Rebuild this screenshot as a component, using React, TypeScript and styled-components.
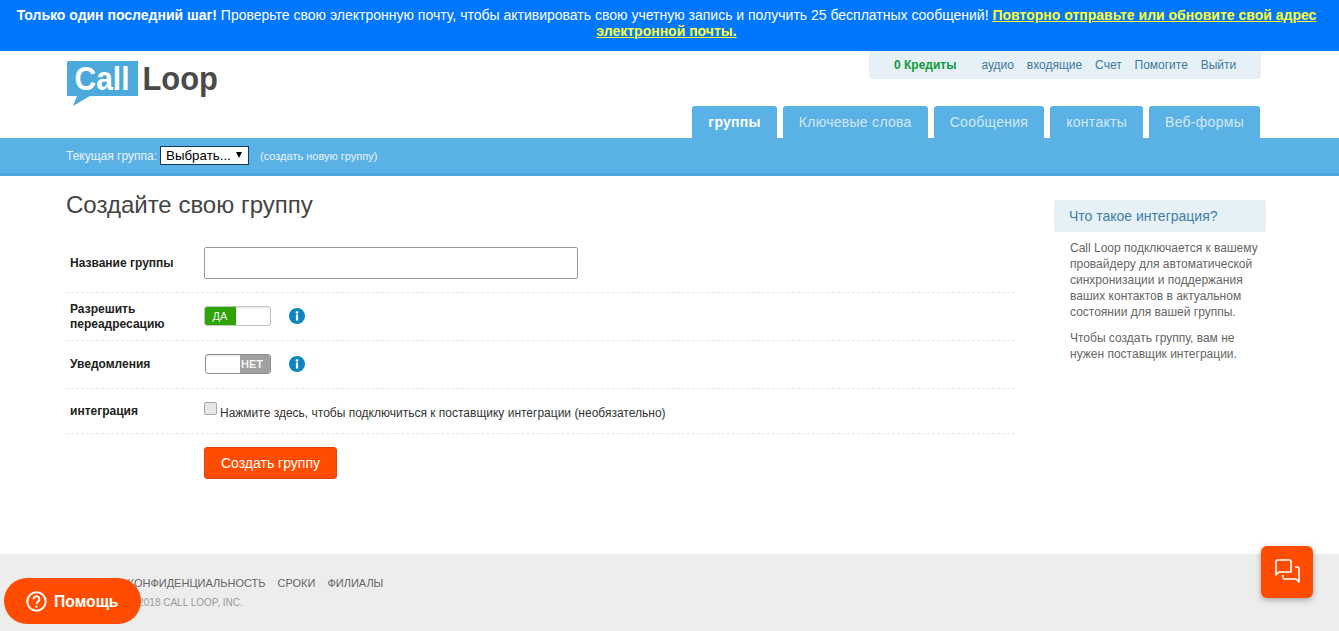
import React from "react";
import styled, { createGlobalStyle } from "styled-components";

const Global = createGlobalStyle`
  html, body { margin: 0; padding: 0; background: #fff; }
  body { font-family: "Liberation Sans", Arial, sans-serif; overflow: hidden; }
  * { box-sizing: border-box; }
`;

const Page = styled.div`
  height: 631px;
  display: flex;
  flex-direction: column;
`;

const Banner = styled.div`
  height: 51px;
  background: #0077ff;
  color: #fff;
  font-size: 14px;
  line-height: 16px;
  padding: 7px 22px 0 16px;
  text-align: center;
  b { font-weight: 700; }
  a { color: #ffff33; font-weight: 700; text-decoration: underline; }
`;

const Header = styled.header`
  height: 87px;
  padding: 0 78px 0 66px;
  display: flex;
  justify-content: space-between;
`;

const Logo = styled.svg`
  display: block;
  margin: 10px 0 0 1px;
`;

const HeaderRight = styled.div`
  display: flex;
  flex-direction: column;
  align-items: flex-end;
  justify-content: space-between;
`;

const TopLinks = styled.nav`
  width: 392px;
  height: 28px;
  background: #e6f0f7;
  border-radius: 0 0 3px 3px;
  display: flex;
  align-items: center;
  padding-left: 25px;
  font-size: 12px;
  color: #41789e;
`;

const Credits = styled.span`
  font-weight: 700;
  color: #0f9a3a;
  margin-right: 25px;
`;

const TopLink = styled.a`
  margin-right: 12.85px;
`;

const Tabs = styled.nav`
  display: flex;
  gap: 6px;
  margin-right: 1px;
`;

const Tab = styled.a<{ $active?: boolean }>`
  height: 32px;
  padding: 0 16px;
  display: flex;
  align-items: center;
  background: #5ab1e5;
  border-radius: 3px 3px 0 0;
  font-size: 14px;
  letter-spacing: 0.28px;
  font-weight: ${(p) => (p.$active ? 700 : 400)};
  color: ${(p) => (p.$active ? "#fff" : "#d2e9f8")};
`;

const GroupBar = styled.div`
  height: 38px;
  background: #5ab1e5;
  border-bottom: 3px solid #4aa6dc;
  padding: 0 0 0 66px;
  display: flex;
  align-items: center;
  font-size: 12px;
  color: #e9f5fc;
`;

const FakeSelect = styled.div`
  width: 89px;
  height: 19px;
  margin-left: 3px;
  border: 1px solid #123a55;
  background: #fff;
  color: #000;
  font-size: 13.33px;
  line-height: 18px;
  padding-left: 5px;
  position: relative;
  &::after {
    content: "";
    position: absolute;
    right: 6px;
    top: 5px;
    border-left: 3.5px solid transparent;
    border-right: 3.5px solid transparent;
    border-top: 6px solid #000;
  }
`;

const CreateLink = styled.a`
  margin-left: 11px;
  font-size: 11px;
`;

const Main = styled.main`
  flex: 1;
  display: flex;
  padding: 15px 0 0 66px;
  gap: 39px;
`;

const FormColumn = styled.section`
  width: 949px;
`;

const Title = styled.h1`
  margin: 0 0 15px;
  font-size: 24px;
  line-height: 28px;
  font-weight: 400;
  color: #444;
`;

const Row = styled.div<{ $h: number }>`
  height: ${(p) => p.$h}px;
  display: grid;
  grid-template-columns: 138px 1fr;
  align-items: center;
  border-bottom: 1px dashed #e8e8e8;
`;

const Label = styled.label`
  padding-left: 4px;
  font-size: 12px;
  line-height: 15px;
  font-weight: 700;
  color: #222;
`;

const TextField = styled.input`
  display: block;
  width: 374px;
  height: 32px;
  border: 1px solid #999;
  border-radius: 2px;
  background: #fff;
  outline: none;
`;

const Field = styled.div`
  display: flex;
  align-items: center;
`;

const ToggleField = styled(Field)`
  margin-bottom: 2px;
`;

const Toggle = styled.div<{ $on?: boolean }>`
  width: ${(p) => (p.$on ? 67 : 66)}px;
  height: 20px;
  margin-left: ${(p) => (p.$on ? 0 : 1)}px;
  border-radius: 3px;
  border: 1px solid ${(p) => (p.$on ? "#c4c4c4" : "#8f8f8f")};
  overflow: hidden;
  display: flex;
  flex-direction: ${(p) => (p.$on ? "row" : "row-reverse")};
  background: #fff;
  box-shadow: inset 0 1px 2px rgba(0, 0, 0, 0.1);
`;

const ToggleFlag = styled.span<{ $on?: boolean }>`
  width: ${(p) => (p.$on ? 32 : 31)}px;
  margin: ${(p) => (p.$on ? "-1px 0 -1px -1px" : "-1px -1px -1px 0")};
  padding-left: ${(p) => (p.$on ? 0 : 1)}px;
  background: ${(p) => (p.$on ? "#2ea307" : "#a0a0a0")};
  color: #f4f4f4;
  font-size: 11px;
  font-weight: ${(p) => (p.$on ? 400 : 700)};
  line-height: 20px;
  text-align: ${(p) => (p.$on ? "center" : "left")};
`;

const InfoIcon = styled.svg`
  display: block;
  margin-left: 18px;
`;

const CheckLine = styled.label`
  display: flex;
  align-items: flex-start;
  font-size: 12px;
  line-height: 14px;
  color: #333;
  margin-top: 3px;
`;

const CheckBox = styled.input`
  appearance: none;
  width: 13px;
  height: 13px;
  margin: -4px 3px 0 0;
  background: #e6e6e6;
  border: 1px solid #a6a6a6;
  border-radius: 2px;
`;

const SubmitRow = styled.div`
  padding: 13px 0 0 138px;
`;

const SubmitButton = styled.button`
  width: 133px;
  height: 32px;
  background: #ff4c00;
  border: 1px solid #e2450a;
  border-radius: 3px;
  color: #fff;
  font-family: inherit;
  font-size: 14px;
  padding: 0;
`;

const Side = styled.aside`
  width: 212px;
  padding-top: 9px;
`;

const SideTitle = styled.div`
  height: 32px;
  padding-left: 15px;
  background: #e6f0f7;
  border-radius: 3px;
  font-size: 14px;
  line-height: 32px;
  color: #3f7ea8;
`;

const SideText = styled.p`
  margin: 8px 4px 10px 16px;
  font-size: 12px;
  line-height: 16px;
  color: #666;
`;

const Footer = styled.footer`
  height: 77px;
  background: #ededed;
  padding: 21px 0 0 66px;
`;

const FooterLinks = styled.nav`
  display: flex;
  gap: 12px;
  font-size: 11px;
  line-height: 16px;
  color: #666;
`;

const Copyright = styled.div`
  margin-top: 5px;
  font-size: 10px;
  line-height: 14px;
  color: #999;
`;

const HelpButton = styled.button`
  position: fixed;
  left: 4px;
  top: 578px;
  width: 137px;
  height: 46px;
  border: 0;
  border-radius: 23px;
  background: #ff4c00;
  color: #fff;
  display: flex;
  align-items: center;
  gap: 7px;
  padding: 0 0 0 22px;
  font-family: "Liberation Sans", Arial, sans-serif;
  font-size: 15.7px;
  font-weight: 700;
`;

const HelpLabel = styled.span`
  margin-top: 2px;
`;

const ChatButton = styled.button`
  position: fixed;
  left: 1261px;
  top: 546px;
  width: 52px;
  height: 52px;
  border: 0;
  border-radius: 6px;
  background: #ff4c00;
  box-shadow: 0 2px 6px rgba(0, 0, 0, 0.3);
  display: flex;
  align-items: center;
  justify-content: center;
  padding: 0;
`;

const Info = () => (
  <InfoIcon width="16" height="16" viewBox="0 0 16 16">
    <circle cx="8" cy="8" r="8" fill="#0d84c4" />
    <circle cx="8" cy="4.4" r="1.3" fill="#fff" />
    <rect x="6.9" y="6.6" width="2.2" height="6" fill="#fff" />
  </InfoIcon>
);

export default function App() {
  return (
    <Page>
      <Global />
      <Banner>
        <b>Только один последний шаг!</b> Проверьте свою электронную почту, чтобы активировать свою учетную запись и получить 25 бесплатных сообщений!{" "}
        <a>Повторно отправьте или обновите свой адрес электронной почты.</a>
      </Banner>
      <Header>
        <Logo width="170" height="46" viewBox="0 0 170 46">
          <path d="M1 0H71V35H23L6 45L10 35H0V1Z" fill="#4ba9dc" />
          <text x="7.500" y="29" fontFamily="Liberation Sans" fontSize="34" fontWeight="700" fill="#fff" textLength="55" lengthAdjust="spacingAndGlyphs">Call</text>
          <text x="75.500" y="29" fontFamily="Liberation Sans" fontSize="33" fontWeight="700" fill="#4a4a4a" textLength="75.500" lengthAdjust="spacingAndGlyphs">Loop</text>
        </Logo>
        <HeaderRight>
          <TopLinks>
            <Credits>0 Кредиты</Credits>
            <TopLink>аудио</TopLink>
            <TopLink>входящие</TopLink>
            <TopLink>Счет</TopLink>
            <TopLink>Помогите</TopLink>
            <TopLink>Выйти</TopLink>
          </TopLinks>
          <Tabs>
            <Tab $active>группы</Tab>
            <Tab>Ключевые слова</Tab>
            <Tab>Сообщения</Tab>
            <Tab>контакты</Tab>
            <Tab>Веб-формы</Tab>
          </Tabs>
        </HeaderRight>
      </Header>
      <GroupBar>
        Текущая группа:
        <FakeSelect>Выбрать...</FakeSelect>
        <CreateLink>(создать новую группу)</CreateLink>
      </GroupBar>
      <Main>
        <FormColumn>
          <Title>Создайте свою группу</Title>
          <Row $h={59}>
            <Label>Название группы</Label>
            <Field><TextField /></Field>
          </Row>
          <Row $h={48}>
            <Label>Разрешить переадресацию</Label>
            <ToggleField>
              <Toggle $on><ToggleFlag $on>ДА</ToggleFlag></Toggle>
              <Info />
            </ToggleField>
          </Row>
          <Row $h={48}>
            <Label>Уведомления</Label>
            <ToggleField>
              <Toggle><ToggleFlag>НЕТ</ToggleFlag></Toggle>
              <Info />
            </ToggleField>
          </Row>
          <Row $h={45}>
            <Label>интеграция</Label>
            <CheckLine>
              <CheckBox type="checkbox" />
              Нажмите здесь, чтобы подключиться к поставщику интеграции (необязательно)
            </CheckLine>
          </Row>
          <SubmitRow>
            <SubmitButton>Создать группу</SubmitButton>
          </SubmitRow>
        </FormColumn>
        <Side>
          <SideTitle>Что такое интеграция?</SideTitle>
          <SideText>Call Loop подключается к вашему провайдеру для автоматической синхронизации и поддержания ваших контактов в актуальном состоянии для вашей группы.</SideText>
          <SideText>Чтобы создать группу, вам не нужен поставщик интеграции.</SideText>
        </Side>
      </Main>
      <Footer>
        <FooterLinks>
          <a>КОНТАКТ</a>
          <a>КОНФИДЕНЦИАЛЬНОСТЬ</a>
          <a>СРОКИ</a>
          <a>ФИЛИАЛЫ</a>
        </FooterLinks>
        <Copyright>COPYRIGHT © 2018 CALL LOOP, INC.</Copyright>
      </Footer>
      <HelpButton>
        <svg width="21" height="21" viewBox="0 0 21 21" fill="none">
          <circle cx="10.5" cy="10.5" r="9.2" stroke="#fff" strokeWidth="2" />
          <path d="M7.6 8.2a2.9 2.9 0 1 1 4.5 2.4c-1 .7-1.6 1.1-1.6 2.3" stroke="#fff" strokeWidth="2" />
          <circle cx="10.5" cy="15.6" r="1.2" fill="#fff" />
        </svg>
        <HelpLabel>Помощь</HelpLabel>
      </HelpButton>
      <ChatButton>
        <svg width="26" height="26" viewBox="0 0 26 26" fill="none" stroke="#fff" strokeWidth="1.6" strokeLinejoin="round">
          <path d="M2 2.5C2 1.7 2.7 1 3.5 1H15.500C16.300 1 17 1.700 17 2.500V13H5L2 16Z" />
          <path d="M21 8H23.500C24.300 8 25 8.700 25 9.500V23L22 20H10.500C9.700 20 9 19.300 9 18.500V16" />
        </svg>
      </ChatButton>
    </Page>
  );
}
